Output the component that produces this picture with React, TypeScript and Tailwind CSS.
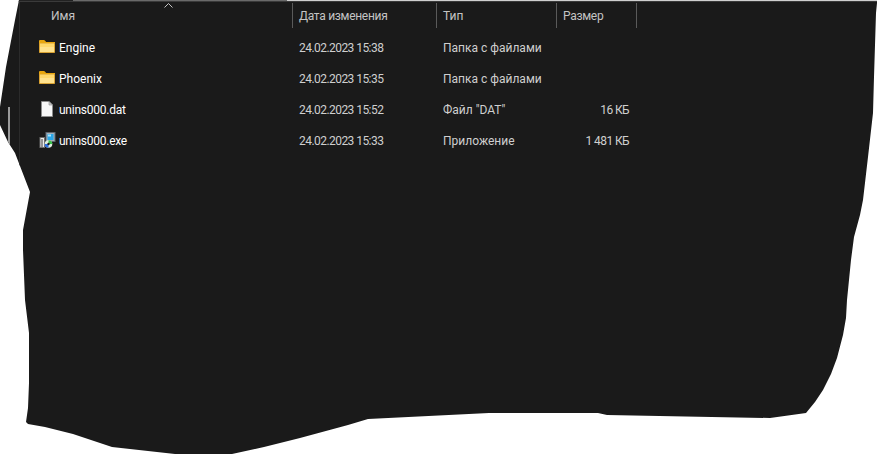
const files = [
  { name: "Engine", nameClass: "", date: "24.02.2023 15:38", type: "Папка с файлами", size: "", icon: "folder" },
  { name: "Phoenix", nameClass: "", date: "24.02.2023 15:35", type: "Папка с файлами", size: "", icon: "folder" },
  { name: "unins000.dat", nameClass: "tracking-[-0.25px]", date: "24.02.2023 15:52", type: 'Файл "DAT"', size: "16 КБ", icon: "file" },
  { name: "unins000.exe", nameClass: "tracking-[-0.25px]", date: "24.02.2023 15:33", type: "Приложение", size: "1 481 КБ", icon: "exe" },
];

function FolderIcon() {
  return (
    <svg width="16" height="13" viewBox="0 0 16 13" className="mr-px -mt-[2px] shrink-0">
      <path d="M0 1.2C0 .5.5 0 1.2 0h3.6c.6 0 .9.3 1.3.7L7.2 2H16v1.5H0z" fill="#e8a60f" />
      <path d="M0 3h15c.6 0 1 .4 1 1v8c0 .6-.4 1-1 1H1c-.6 0-1-.4-1-1z" fill="#d9a233" />
      <path d="M1 3.5h14V12H1z" fill="#ffd86b" />
      <path d="M1 7h14v5H1z" fill="#ffe28e" />
    </svg>
  );
}

function FileIcon() {
  return (
    <svg width="12" height="16" viewBox="0 0 12 16" className="mr-[3px] -mt-px shrink-0">
      <path d="M.5.5h7.5l3.5 3.5v11.500H.5z" fill="#f7f7f7" stroke="#8c8c8c" />
      <path d="M8 .5V4h3.500z" fill="#c9c9c9" stroke="#8c8c8c" strokeWidth="0.6" />
    </svg>
  );
}

function ExeIcon() {
  return (
    <svg width="17" height="16" viewBox="0 0 17 16" className="-mt-px shrink-0">
      <rect x="7" y="0.5" width="9" height="9" fill="#a4afba" stroke="#5d6670" />
      <rect x="8.500" y="2" width="6" height="6" fill="#29a6e8" />
      <rect x="9" y="2.500" width="3" height="2" fill="#a9e4fa" />
      <rect x="1" y="5.500" width="4.500" height="10" fill="#ececec" stroke="#6e6e6e" />
      <rect x="2.500" y="7" width="1" height="8" fill="#3d3d3d" />
      <circle cx="9.500" cy="12" r="3.800" fill="#dcecdc" />
      <path d="M9.500 12V8.200a3.800 3.800 0 0 1 3.800 3.800z" fill="#39c24a" />
      <path d="M9.500 12v3.800A3.800 3.800 0 0 1 5.700 12z" fill="#2b6fe0" />
      <circle cx="9.500" cy="12" r="1.200" fill="#1a1a1a" />
    </svg>
  );
}

function RowIcon({ kind }: { kind: string }) {
  if (kind === "folder") return <FolderIcon />;
  if (kind === "file") return <FileIcon />;
  return <ExeIcon />;
}

export default function App() {
  return (
    <div className="relative h-[454px] w-[877px] overflow-hidden bg-white font-['Roboto',sans-serif]">
      <div className="flex h-full w-full flex-col bg-[#1a1a1a] [clip-path:polygon(19px_0,15px_20px,6px_67px,0_107px,0_125px,8px_142px,15px_153px,30px_192px,23px_230px,23px_250px,25px_300px,29px_333px,29px_383px,28px_408px,26px_422px,28px_424px,45px_427px,73px_434px,100px_443px,112px_447px,175px_454px,232px_454px,264px_447px,300px_438px,348px_425px,368px_419px,489px_413px,598px_413px,607px_415px,770px_418px,806px_413px,815px_402px,823px_390px,831px_374px,837px_358px,843px_335px,846px_318px,847px_300px,851px_260px,854px_237px,860px_215px,863px_200px,868px_157px,873px_113px,874px_77px,876px_13px,877px_3px,877px_0)]">
        <div className="flex h-px shrink-0">
          <div className="w-[73px] bg-[#222222]" />
          <div className="w-[214px] bg-[#6a6a6a]" />
          <div className="flex-1 bg-[#d0d0d0]" />
        </div>
        <div className="h-px shrink-0 bg-[#3a3a3a]" />
        <div className="flex min-h-0 flex-1">
          <div className="w-[19px] shrink-0" />
          <div className="flex w-[858px] flex-col border-l border-[#2b2b2b]">
            <div className="flex h-[26px] shrink-0 pt-px text-[12px] leading-[26px] text-[#c4c4c4]">
              <div className="w-[273px] border-r border-[#5a5a5a] pl-[31px]">Имя</div>
              <div className="w-[144px] border-r border-[#5a5a5a] pl-[6px] tracking-[-0.3px]">Дата изменения</div>
              <div className="w-[120px] border-r border-[#5a5a5a] pl-[6px]">Тип</div>
              <div className="w-[80px] border-r border-[#5a5a5a] pl-[6px] tracking-[-0.3px]">Размер</div>
            </div>
            <div className="flex flex-col pt-[4px] text-[12px]">
              {files.map((f) => (
                <div key={f.name} className="flex h-[31px] items-center text-[#cfcfcf]">
                  <div className="flex w-[273px] items-center">
                    <div className="flex w-[39px] justify-end pr-[3px]">
                      <RowIcon kind={f.icon} />
                    </div>
                    <span className={`text-white ${f.nameClass}`}>{f.name}</span>
                  </div>
                  <div className="w-[144px] pl-[6px] tracking-[-0.55px]">{f.date}</div>
                  <div className="w-[120px] pl-[6px]">{f.type}</div>
                  <div className="w-[80px] pr-[8px] text-right tracking-[-0.6px]">{f.size}</div>
                </div>
              ))}
            </div>
          </div>
        </div>
        <div className="absolute left-[8px] top-[107px] h-[41px] w-[2px] bg-[#9a9a9a]" />
        <svg width="9" height="5" viewBox="0 0 9 5" className="absolute left-[164px] top-[3px]">
          <path d="M.5 4.500l4-4 4 4" fill="none" stroke="#c4c4c4" />
        </svg>
      </div>
    </div>
  );
}
